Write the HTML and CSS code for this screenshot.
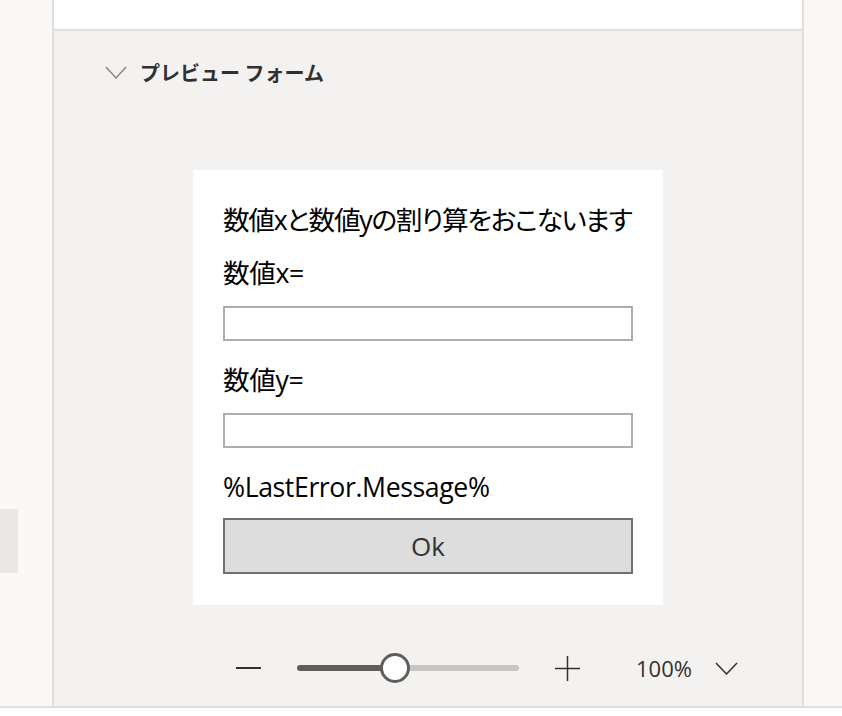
FILE: index.html
```html
<!DOCTYPE html>
<html lang="ja">
<head>
  <meta charset="UTF-8">
  <title>プレビュー フォーム</title>
  <link rel="stylesheet" href="styles.css">
</head>
<body>

  <div class="app">
    <!-- 左ペイン -->
    <div class="side-left">
      <div class="side-tab"></div>
    </div>

    <!-- メイン -->
    <div class="main">
      <div class="top-strip"></div>

      <div class="section-head">
        <svg class="chev" width="22" height="13" viewBox="0 0 22 13">
          <polyline points="1,1 11,12 21,1" fill="none" stroke="#8a8886" stroke-width="1.5"/>
        </svg>
        <span class="section-title">プレビュー フォーム</span>
      </div>

      <div class="preview">
        <div class="form-card">
          <div class="form-label first">数値xと数値yの割り算をおこないます</div>
          <div class="form-label">数値x=</div>
          <input class="form-input" type="text">
          <div class="form-label">数値y=</div>
          <input class="form-input" type="text">
          <div class="form-label">%LastError.Message%</div>
          <button class="form-btn">Ok</button>
        </div>
      </div>

      <div class="zoom-bar">
        <svg class="zoom-minus" width="25" height="24" viewBox="0 0 25 24">
          <line x1="0" y1="12" x2="25" y2="12" stroke="#323130" stroke-width="2"/>
        </svg>
        <div class="zoom-track">
          <div class="zoom-thumb"></div>
        </div>
        <svg class="zoom-plus" width="25" height="25" viewBox="0 0 25 25">
          <line x1="0" y1="12.5" x2="25" y2="12.5" stroke="#323130" stroke-width="1.5"/>
          <line x1="12.5" y1="0" x2="12.5" y2="25" stroke="#323130" stroke-width="1.5"/>
        </svg>
        <span class="zoom-value">100%</span>
        <svg class="zoom-drop" width="23" height="13" viewBox="0 0 23 13">
          <polyline points="1,1 11.5,12 22,1" fill="none" stroke="#323130" stroke-width="1.5"/>
        </svg>
      </div>
    </div>

    <!-- 右ペイン -->
    <div class="side-right"></div>
  </div>

</body>
</html>
```

FILE: styles.css
```css
    body {
      margin: 0;
      background: #fff;
      font-family: 'Open Sans', 'Noto Sans CJK JP', sans-serif;
      color: #323130;
      overflow: hidden;
    }

    .app {
      display: flex;
      height: 706px;
      border-bottom: 2px solid #e1dfdd;
    }

    .side-left {
      width: 52px;
      background: #faf9f8;
      display: flex;
      flex-direction: column;
    }

    .side-tab {
      margin-top: 509px;
      width: 18px;
      height: 64px;
      background: #e9e8e7;
    }

    .main {
      width: 748px;
      border-left: 2px solid #e1dfdd;
      border-right: 2px solid #e1dfdd;
      background: #f3f2f1;
      display: flex;
      flex-direction: column;
    }

    .side-right {
      flex: 1;
      background: #faf9f8;
    }

    .top-strip {
      height: 29px;
      background: #fff;
      border-bottom: 2px solid #e1dfdd;
    }

    .section-head {
      display: flex;
      align-items: center;
      height: 40px;
      margin-top: 21px;
      padding-left: 51px;
    }

    .chev {
      margin-right: 13px;
    }

    .section-title {
      font-family: 'Noto Sans CJK JP', sans-serif;
      font-size: 20px;
      font-weight: 700;
      color: #323130;
    }

    .preview {
      flex: 1;
      display: flex;
      justify-content: center;
      align-items: flex-start;
      padding-top: 78px;
    }

    .form-card {
      width: 410px;
      background: #fff;
      padding: 34px 30px 31px;
      display: flex;
      flex-direction: column;
    }

    .form-label {
      font-size: 26.67px;
      letter-spacing: -0.4px;
      font-feature-settings: "palt";
      line-height: 32px;
      height: 32px;
      color: #000;
      white-space: nowrap;
      margin-top: 23px;
      margin-bottom: 17px;
    }

    .form-label.first {
      letter-spacing: -1.3px;
      margin-top: 0;
      margin-bottom: 21px;
    }

    .form-label:nth-child(2) {
      margin-top: 0;
    }

    .form-input {
      display: block;
      box-sizing: border-box;
      width: 410px;
      height: 35px;
      margin: 0;
      border: 2px solid #abadb3;
      background: #fff;
      outline: none;
    }

    .form-label:nth-last-child(2) {
      margin-bottom: 15px;
    }

    .form-btn {
      box-sizing: border-box;
      width: 410px;
      height: 56px;
      margin: 0;
      background: #dddddd;
      border: 2px solid #707070;
      font-family: 'Open Sans', sans-serif;
      font-size: 26px;
      color: #333;
      padding: 0;
    }

    .zoom-bar {
      display: flex;
      align-items: center;
      height: 40px;
      margin-bottom: 18px;
      padding-left: 182px;
    }

    .zoom-track {
      position: relative;
      width: 222px;
      height: 6px;
      margin: 0 36px;
      border-radius: 3px;
      background: linear-gradient(to right, #605e5c 0, #605e5c 98px, #c8c6c4 98px);
    }

    .zoom-thumb {
      position: absolute;
      left: 83px;
      top: -12px;
      width: 24px;
      height: 24px;
      border: 3px solid #605e5c;
      border-radius: 50%;
      background: #fff;
    }

    .zoom-value {
      margin-left: 56px;
      margin-right: 23px;
      font-size: 22px;
      color: #323130;
    }
```
